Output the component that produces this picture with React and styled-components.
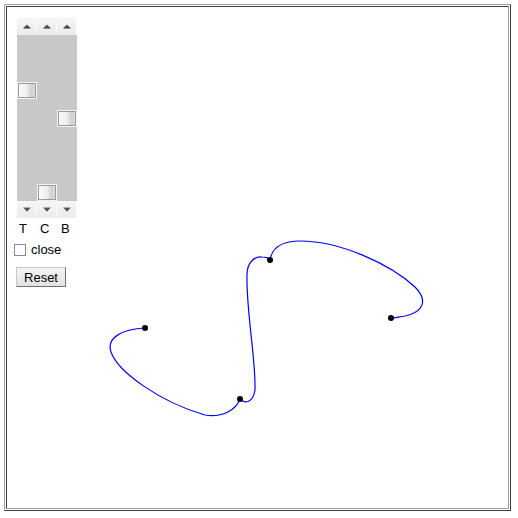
import React from "react";
import styled, { createGlobalStyle } from "styled-components";

const GlobalStyle = createGlobalStyle`
  body {
    margin: 0;
    background: #fff;
    font-family: "Liberation Sans", Arial, sans-serif;
    font-size: 13px;
    color: #000;
  }
`;

const Frame = styled.div`
  box-sizing: border-box;
  margin: 4px;
  width: 507px;
  height: 507px;
  padding: 1px;
  border: 1px solid;
  border-color: #a0a0a0 #404040 #404040 #a0a0a0;
`;

const Canvas = styled.div`
  box-sizing: border-box;
  position: relative;
  width: 100%;
  height: 100%;
  border: 1px solid;
  border-color: #404040 #a0a0a0 #a0a0a0 #404040;
`;

const Controls = styled.div`
  position: relative;
  z-index: 1;
  display: flex;
  flex-direction: column;
  align-items: flex-start;
  width: 70px;
  padding: 11px 0 0 7px;
`;

const SliderPanel = styled.div`
  display: flex;
  margin-left: 3px;
  height: 200px;
`;

const SliderColumn = styled.div`
  display: flex;
  flex-direction: column;
  width: 20px;
`;

const ArrowButton = styled.div`
  height: 17px;
  display: flex;
  align-items: center;
  justify-content: center;
  background: linear-gradient(#f6f6f6, #ebebeb);
  box-shadow: inset -1px 0 0 #fafafa;
`;

const Track = styled.div`
  position: relative;
  flex: 1;
  background: #c8c8c8;
`;

const Thumb = styled.div`
  position: absolute;
  left: 0;
  top: ${({ $top }) => $top}px;
  box-sizing: border-box;
  width: 20px;
  height: 17px;
  border: 1px solid #f4f4f4;
  & > div {
    width: 100%;
    height: 100%;
    box-sizing: border-box;
    border: 1px solid #9a9a9a;
    background: linear-gradient(to right, #fafafa 0%, #f0f0f0 45%, #cfcfcf 80%, #dcdcdc 100%);
  }
`;

const Labels = styled.div`
  display: flex;
  margin: 3px 0 0 4px;
  height: 15px;
  line-height: 15px;
  & span {
    width: 20px;
    padding-left: 1px;
  }
`;

const CheckRow = styled.label`
  display: flex;
  align-items: center;
  gap: 5px;
  margin-top: 6px;
  height: 15px;
`;

const CheckBox = styled.span`
  box-sizing: border-box;
  width: 12px;
  height: 12px;
  border: 1px solid #8a8a8a;
  background: #fff;
`;

const ResetButton = styled.button`
  margin: 10px 0 0 2px;
  box-sizing: border-box;
  width: 50px;
  height: 20px;
  padding: 0;
  font-family: "Liberation Sans", Arial, sans-serif;
  font-size: 13px;
  color: #000;
  background: linear-gradient(#f4f4f4, #e2e2e2);
  border: 1px solid;
  border-color: #c8c8c8 #707070 #707070 #c8c8c8;
  border-radius: 0;
`;

const Plot = styled.svg`
  position: absolute;
  left: 0;
  top: 0;
  width: 100%;
  height: 100%;
`;

function Arrow({ up }) {
  return (
    <svg width="8" height="5" viewBox="0 0 8 5">
      <defs>
        <linearGradient id={up ? "ga" : "gb"} x1="0" y1="0" x2="0" y2="1">
          <stop offset="0" stopColor="#666" />
          <stop offset="1" stopColor="#333" />
        </linearGradient>
      </defs>
      <path
        d={up ? "M0 4.5 L4 0.5 L8 4.5 Z" : "M0 0.5 L8 0.5 L4 4.5 Z"}
        fill={`url(#${up ? "ga" : "gb"})`}
      />
    </svg>
  );
}

const sliders = [
  { key: "T", top: 47 },
  { key: "C", top: 149 },
  { key: "B", top: 75 },
];

const points = [
  [145, 328],
  [240, 399],
  [270, 260],
  [391, 318],
];

const curve =
  "M145 328 C 122 329, 106 338, 111 352 C 118 372, 160 402, 205 415 C 222 418, 236 410, 240 399 " +
  "C 245 404, 253 403, 255 390 C 256 360, 246 310, 247 275 C 247 262, 255 256, 262 257 C 266 257, 269 258, 270 260 " +
  "C 272 248, 282 241, 300 241 C 340 241, 390 264, 415 287 C 428 300, 424 312, 405 316 C 398 317, 394 318, 391 318";

export default function App() {
  return (
    <>
      <GlobalStyle />
      <Frame>
        <Canvas>
          <Plot>
            <g transform="translate(-7,-7)">
              <path d={curve} fill="none" stroke="#0000ff" strokeWidth="1.2" />
              {points.map(([x, y]) => (
                <circle key={x} cx={x} cy={y} r="3" fill="#000" />
              ))}
            </g>
          </Plot>
          <Controls>
            <SliderPanel>
              {sliders.map((s) => (
                <SliderColumn key={s.key}>
                  <ArrowButton>
                    <Arrow up />
                  </ArrowButton>
                  <Track>
                    <Thumb $top={s.top}>
                      <div />
                    </Thumb>
                  </Track>
                  <ArrowButton>
                    <Arrow />
                  </ArrowButton>
                </SliderColumn>
              ))}
            </SliderPanel>
            <Labels>
              {sliders.map((s) => (
                <span key={s.key}>{s.key}</span>
              ))}
            </Labels>
            <CheckRow>
              <CheckBox />
              close
            </CheckRow>
            <ResetButton>Reset</ResetButton>
          </Controls>
        </Canvas>
      </Frame>
    </>
  );
}
